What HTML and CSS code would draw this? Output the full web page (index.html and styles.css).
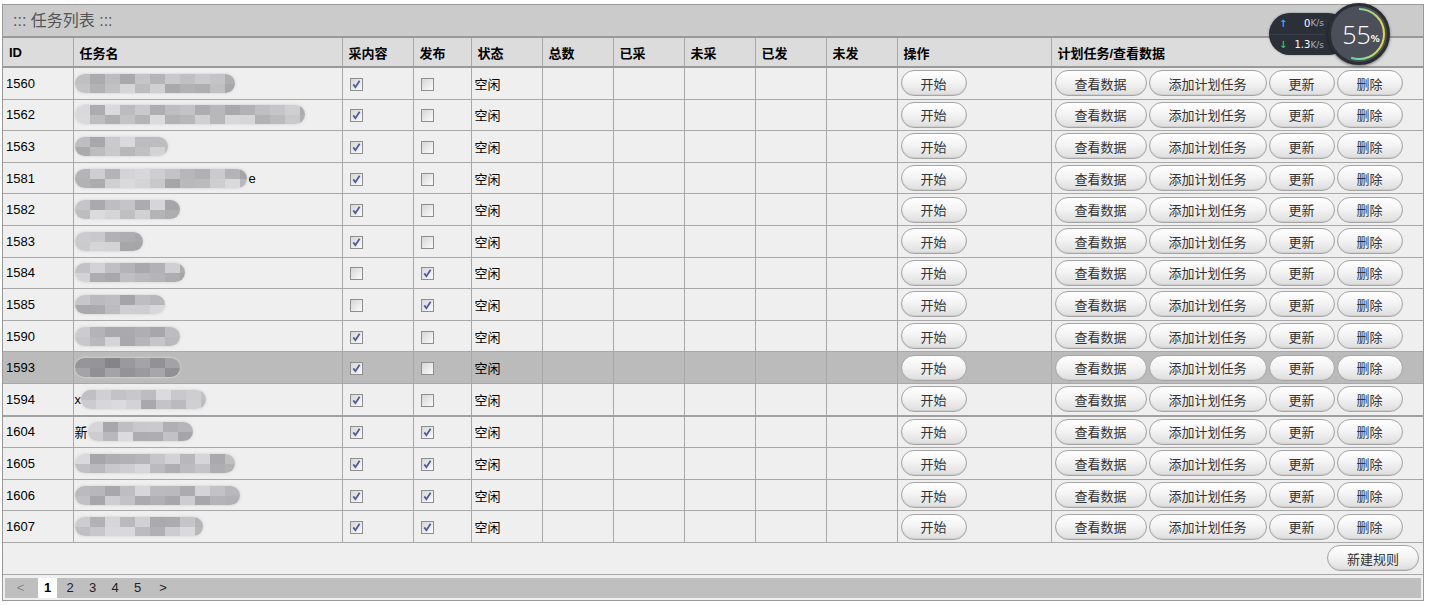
FILE: index.html
```
<!DOCTYPE html>
<html lang="zh-CN">
<head>
  <meta charset="UTF-8">
  <title>任务列表</title>
  <link rel="stylesheet" href="styles.css">
</head>
<body>

  <!-- floating net speed ball -->
  <div class="speed-ball">
    <div class="speed-pill">
      <div class="speed-line"><span class="arrow up">&#8593;</span><span class="val">0</span><span class="unit">K/s</span></div>
      <div class="speed-line"><span class="arrow down">&#8595;</span><span class="val">1.3</span><span class="unit">K/s</span></div>
    </div>
    <div class="speed-circle">
      <svg class="speed-ring" width="54" height="54" viewBox="0 0 54 54">
        <defs>
          <linearGradient id="ringGrad" x1="0" y1="0" x2="0" y2="1">
            <stop offset="0" stop-color="#2fd3c4"/>
            <stop offset="0.55" stop-color="#7fd99a"/>
            <stop offset="1" stop-color="#e6d83c"/>
          </linearGradient>
        </defs>
        <circle cx="27" cy="27" r="25" fill="none" stroke="url(#ringGrad)" stroke-width="2"
                stroke-dasharray="86 200" transform="rotate(-90 27 27)"/>
      </svg>
      <span class="pct">55</span><span class="pct-sign">%</span>
    </div>
  </div>

  <div class="panel">
    <div class="panel-title">::: 任务列表 :::</div>

    <table class="task-table">
      <colgroup>
        <col style="width:70px">
        <col style="width:269px">
        <col style="width:71px">
        <col style="width:58px">
        <col style="width:71px">
        <col style="width:71px">
        <col style="width:71px">
        <col style="width:71px">
        <col style="width:71px">
        <col style="width:71px">
        <col style="width:154px">
        <col>
      </colgroup>
      <thead>
        <tr>
          <th>ID</th>
          <th>任务名</th>
          <th>采内容</th>
          <th>发布</th>
          <th>状态</th>
          <th>总数</th>
          <th>已采</th>
          <th>未采</th>
          <th>已发</th>
          <th>未发</th>
          <th>操作</th>
          <th>计划任务/查看数据</th>
        </tr>
      </thead>
      <tbody id="rows"></tbody>
    </table>

    <div class="table-foot">
      <button class="btn">新建规则</button>
    </div>

    <div class="pager">
      <a class="page prev">&lt;</a>
      <a class="page current">1</a>
      <a class="page">2</a>
      <a class="page">3</a>
      <a class="page">4</a>
      <a class="page">5</a>
      <a class="page next">&gt;</a>
    </div>
  </div>

  <script>
    // task rows: blob = width of the blurred name, pre = visible leading char
    const tasks = [
      { id: 1560, blob: 160, cj: true,  fb: false },
      { id: 1562, blob: 230, cj: true,  fb: false },
      { id: 1563, blob: 93,  cj: true,  fb: false },
      { id: 1581, blob: 172, cj: true,  fb: false, post: 'e' },
      { id: 1582, blob: 105, cj: true,  fb: false },
      { id: 1583, blob: 68,  cj: true,  fb: false },
      { id: 1584, blob: 110, cj: false, fb: true },
      { id: 1585, blob: 90,  cj: false, fb: true },
      { id: 1590, blob: 105, cj: true,  fb: false },
      { id: 1593, blob: 105, cj: true,  fb: false, hover: true },
      { id: 1594, blob: 125, cj: true,  fb: false, pre: 'x' },
      { id: 1604, blob: 105, cj: true,  fb: true,  pre: '新', sep: true },
      { id: 1605, blob: 160, cj: true,  fb: true },
      { id: 1606, blob: 165, cj: true,  fb: true },
      { id: 1607, blob: 128, cj: true,  fb: true }
    ];

    let seed = 7;
    function rand() {
      seed = (seed * 9301 + 49297) % 233280;
      return seed / 233280;
    }

    function blobHtml(width, dark) {
      let cells = '';
      const blocks = Math.ceil(width / 15) * 2;
      for (let i = 0; i < blocks; i++) {
        let g = dark ? 128 + Math.round(rand() * 40) : 165 + Math.round(rand() * 55);
        cells += '<i style="background:rgb(' + g + ',' + g + ',' + (g + 2) + ')"></i>';
      }
      return '<span class="blob" style="width:' + width + 'px">' + cells + '</span>';
    }

    function checkbox(on) {
      let mark = on ? '<svg width="11" height="11" viewBox="0 0 11 11"><path d="M2.3 5.4 L4.4 8.2 L8.6 1.8" fill="none" stroke="#4a5d9c" stroke-width="1.8"/></svg>' : '';
      return '<span class="cb">' + mark + '</span>';
    }

    const body = document.getElementById('rows');
    tasks.forEach(t => {
      let tr = document.createElement('tr');
      if (t.hover) tr.className = 'hover';
      if (t.sep) tr.className = 'sep';
      tr.innerHTML =
        '<td>' + t.id + '</td>' +
        '<td class="name">' + (t.pre ? '<span>' + t.pre + '</span>' : '') + blobHtml(t.blob, t.hover) +
          (t.post ? '<span class="post">' + t.post + '</span>' : '') + '</td>' +
        '<td class="chk">' + checkbox(t.cj) + '</td>' +
        '<td class="chk">' + checkbox(t.fb) + '</td>' +
        '<td>空闲</td>' +
        '<td></td><td></td><td></td><td></td><td></td>' +
        '<td class="ops"><button class="btn">开始</button></td>' +
        '<td class="ops"><button class="btn">查看数据</button><button class="btn">添加计划任务</button>' +
          '<button class="btn">更新</button><button class="btn">删除</button></td>';
      body.appendChild(tr);
    });
  </script>

</body>
</html>
```

FILE: styles.css
```
body {
  margin: 0;
  padding: 4px 5px 0 2px;
  background: #fff;
  color: #000;
  font-family: "Liberation Sans", Arial, "Noto Sans CJK SC", sans-serif;
  font-size: 13px;
}

.panel {
  border: 1px solid #999;
  background: #efefef;
}

.panel-title {
  height: 31px;
  line-height: 31px;
  padding-left: 10px;
  background: #cbcbcb;
  color: #555;
  font-size: 16px;
  border-bottom: 2px solid #999;
}

/* table */
.task-table {
  width: 100%;
  table-layout: fixed;
  border-collapse: collapse;
}

.task-table th {
  height: 28px;
  padding: 0 6px;
  text-align: left;
  font-weight: bold;
  background: #dcdcdc;
  border: 1px solid #a8a8a8;
  border-top: none;
  border-bottom: 2px solid #999;
  white-space: nowrap;
}

.task-table td {
  height: 30.6px;
  padding: 0 3px;
  border: 1px solid #a8a8a8;
  white-space: nowrap;
  overflow: hidden;
}

.task-table th:first-child,
.task-table td:first-child {
  border-left: none;
}

.task-table th:last-child,
.task-table td:last-child {
  border-right: none;
}

.task-table tr.hover td {
  background: #bbb;
}

.task-table tr.sep td {
  border-top: 2px solid #a0a0a0;
}

.task-table td.name {
  padding-left: 1px;
}

.name > span {
  vertical-align: middle;
}

.post {
  margin-left: 2px;
}

.blob {
  display: inline-grid;
  grid-auto-flow: column;
  grid-template-rows: 10px 9px;
  grid-auto-columns: 15px;
  height: 19px;
  border-radius: 10px;
  overflow: hidden;
  vertical-align: middle;
  filter: blur(0.5px);
  box-shadow: 0 0 2px 1px rgba(215, 215, 215, 0.7);
}

.blob i {
  display: block;
}

.task-table td.chk {
  padding-left: 7px;
}

.cb {
  display: inline-block;
  width: 11px;
  height: 11px;
  border: 1px solid #8e8e8e;
  background: linear-gradient(135deg, #d6d6d6, #fbfbfb);
  vertical-align: middle;
}

.cb svg {
  display: block;
}

/* pill buttons */
.btn {
  height: 26px;
  padding: 0 19px;
  margin: 0 2px 0 0;
  border: 1px solid #a5a5a5;
  border-radius: 13px;
  background: linear-gradient(#ffffff, #f4f4f4 45%, #dedede);
  box-shadow: inset 0 -1px 1px #cfcfcf;
  color: #333;
  font-family: "Liberation Sans", Arial, "Noto Sans CJK SC", sans-serif;
  font-size: 13px;
  vertical-align: middle;
  cursor: pointer;
}

.task-table td.ops {
  padding-left: 3px;
}

.table-foot {
  height: 31px;
  display: flex;
  justify-content: flex-end;
  align-items: center;
  padding-right: 2px;
  border-bottom: 1px solid #a8a8a8;
}

.table-foot .btn {
  padding: 0 19px;
}

/* pagination */
.pager {
  height: 20px;
  margin: 3px 2px 2px 2px;
  padding-left: 6px;
  background: #bfbfbf;
  display: flex;
  align-items: center;
  gap: 3.5px;
}

.page {
  width: 19px;
  height: 20px;
  line-height: 20px;
  text-align: center;
  color: #222;
  cursor: pointer;
}

.page.current {
  background: #fff;
  color: #000;
  font-weight: bold;
}

.page.prev {
  color: #888;
  margin-right: 4.5px;
}

.page.next {
  margin-left: 3px;
}

/* net speed ball overlay */
.speed-ball {
  position: absolute;
  left: 1269px;
  top: 3px;
  width: 122px;
  height: 62px;
}

.speed-pill {
  position: absolute;
  left: 0;
  top: 10px;
  width: 80px;
  height: 42px;
  border-radius: 21px;
  background: #2b2f38;
  box-shadow: 0 0 2px rgba(0, 0, 0, 0.4);
  display: flex;
  flex-direction: column;
  font-family: "DejaVu Sans", sans-serif;
}

.speed-line {
  height: 21px;
  display: flex;
  align-items: center;
  padding: 0 0 0 10px;
  width: 45px;
}

.speed-line + .speed-line {
  border-top: 1px solid #3a3f49;
}

.arrow {
  font-size: 10px;
  font-weight: bold;
  width: 12px;
}

.arrow.up {
  color: #3ea6e6;
}

.arrow.down {
  color: #37c45a;
}

.val {
  margin-left: auto;
  color: #fff;
  font-size: 10px;
}

.unit {
  color: #a9adb5;
  font-size: 9px;
}

.speed-circle {
  position: absolute;
  left: 59px;
  top: 0;
  width: 56px;
  height: 56px;
  border-radius: 50%;
  border: 3px solid #2b2e35;
  background: #4b4f5a;
  box-shadow: 0 1px 3px rgba(0, 0, 0, 0.5);
  display: flex;
  align-items: center;
  justify-content: center;
}

.speed-ring {
  position: absolute;
  left: 1px;
  top: 1px;
}

.pct {
  color: #fff;
  font-family: "Open Sans", "DejaVu Sans", sans-serif;
  font-weight: 300;
  font-size: 25px;
  line-height: 1;
  margin-left: 4px;
}

.pct-sign {
  color: #fff;
  font-family: "DejaVu Sans", sans-serif;
  font-size: 9px;
  font-weight: bold;
  margin-top: 10px;
}
```
